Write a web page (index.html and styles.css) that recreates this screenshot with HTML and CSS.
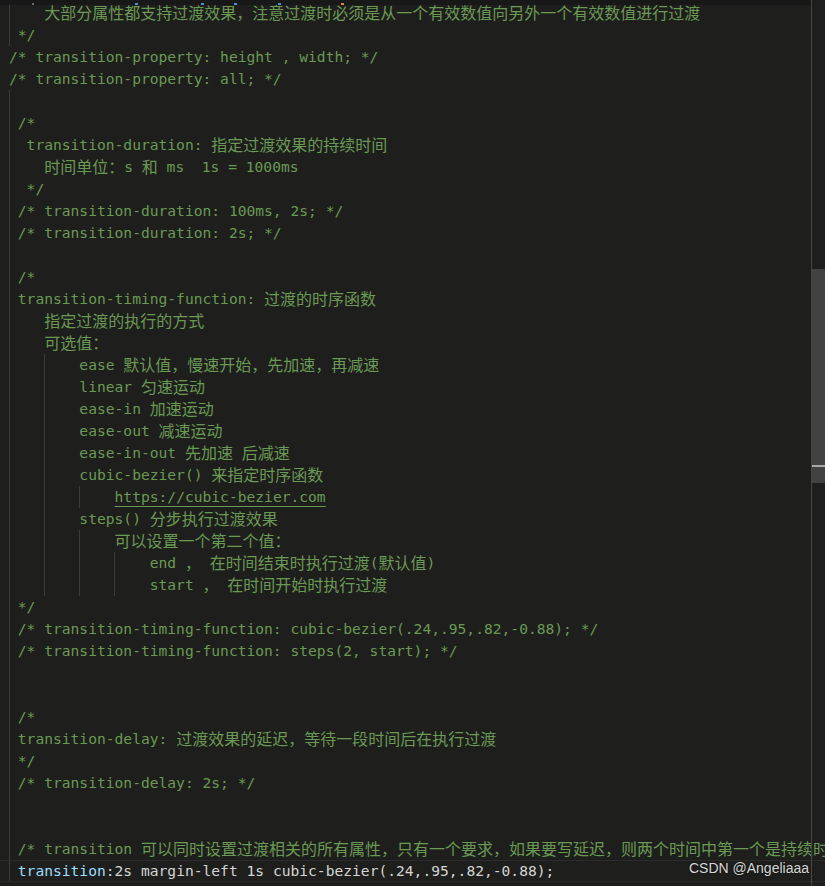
FILE: index.html
```html
<!DOCTYPE html>
<html lang="zh">
<head>
<meta charset="utf-8">
<title>transition</title>
<link rel="stylesheet" href="styles.css">
</head>
<body>
<div class="editor">
  <div class="code">
    <div class="line">    <span class="z">大部分属性都支持过渡效果，注意过渡时必须是从一个有效数值向另外一个有效数值进行过渡</span></div>
    <div class="line"> */</div>
    <div class="line c0">/* transition-property: height , width; */</div>
    <div class="line c0">/* transition-property: all; */</div>
    <div class="line"></div>
    <div class="line"> /*</div>
    <div class="line">  transition-duration: <span class="z">指定过渡效果的持续时间</span></div>
    <div class="line">    <span class="z">时间单位：</span>s <span class="z">和</span> ms  1s = 1000ms</div>
    <div class="line">  */</div>
    <div class="line"> /* transition-duration: 100ms, 2s; */</div>
    <div class="line"> /* transition-duration: 2s; */</div>
    <div class="line"></div>
    <div class="line"> /*</div>
    <div class="line"> transition-timing-function: <span class="z">过渡的时序函数</span></div>
    <div class="line">    <span class="z">指定过渡的执行的方式</span></div>
    <div class="line">    <span class="z">可选值：</span></div>
    <div class="line g4">        ease <span class="z">默认值，慢速开始，先加速，再减速</span></div>
    <div class="line g4">        linear <span class="z">匀速运动</span></div>
    <div class="line g4">        ease-in <span class="z">加速运动</span></div>
    <div class="line g4">        ease-out <span class="z">减速运动</span></div>
    <div class="line g4">        ease-in-out <span class="z">先加速</span> <span class="z">后减速</span></div>
    <div class="line g4">        cubic-bezier() <span class="z">来指定时序函数</span></div>
    <div class="line g8">            <span class="link">https://cubic-bezier.com</span></div>
    <div class="line g4">        steps() <span class="z">分步执行过渡效果</span></div>
    <div class="line g8">            <span class="z">可以设置一个第二个值：</span></div>
    <div class="line g12">                end <span class="z">，</span> <span class="z">在时间结束时执行过渡</span>(<span class="z">默认值</span>)</div>
    <div class="line g12">                start <span class="z">，</span> <span class="z">在时间开始时执行过渡</span></div>
    <div class="line"> */</div>
    <div class="line"> /* transition-timing-function: cubic-bezier(.24,.95,.82,-0.88); */</div>
    <div class="line"> /* transition-timing-function: steps(2, start); */</div>
    <div class="line"></div>
    <div class="line"></div>
    <div class="line"> /*</div>
    <div class="line"> transition-delay: <span class="z">过渡效果的延迟，等待一段时间后在执行过渡</span></div>
    <div class="line"> */</div>
    <div class="line"> /* transition-delay: 2s; */</div>
    <div class="line"></div>
    <div class="line"></div>
    <div class="line"> /* transition <span class="z">可以同时设置过渡相关的所有属性，只有一个要求，如果要写延迟，则两个时间中第一个是持续时</span></div>
    <div class="line cur"> <span class="prop">transition</span><span class="val">:2s margin-left 1s cubic-bezier(.24,.95,.82,-0.88);</span></div>
  </div>
  <div class="topshade">
    <span class="frag f1"></span><span class="frag f2"></span><span class="frag f3"></span><span class="frag f4"></span><span class="frag f5"></span><span class="frag f6"></span>
  </div>
  <div class="vscroll">
    <div class="thumb"><div class="mark"></div></div>
  </div>
  <div class="watermark">CSDN @Angeliaaa</div>
</div>
</body>
</html>
```
FILE: styles.css
```css
html, body {
  margin: 0;
  padding: 0;
  background: #1e1f1c;
  overflow: hidden;
}

.editor {
  position: relative;
  width: 825px;
  height: 886px;
  overflow: hidden;
  background: #1e1f1c;
}

.code {
  padding-top: 2px;
  font-family: "DejaVu Sans Mono", "Liberation Mono", monospace;
  font-size: 14.62px;
  color: #6a9955;
}

.line {
  --gc: #3c3d3a;
  height: 22px;
  line-height: 22px;
  white-space: pre;
  padding-left: 9px;
  box-sizing: border-box;
  background: linear-gradient(var(--gc), var(--gc)) 9px 0 / 1px 100% no-repeat;
}

.line.c0 {
  background: none;
}

.line.g4 {
  background:
    linear-gradient(var(--gc), var(--gc)) 9px 0 / 1px 100% no-repeat,
    linear-gradient(var(--gc), var(--gc)) 44px 0 / 1px 100% no-repeat;
}

.line.g8 {
  background:
    linear-gradient(var(--gc), var(--gc)) 9px 0 / 1px 100% no-repeat,
    linear-gradient(var(--gc), var(--gc)) 44px 0 / 1px 100% no-repeat,
    linear-gradient(var(--gc), var(--gc)) 79px 0 / 1px 100% no-repeat;
}

.line.g12 {
  background:
    linear-gradient(var(--gc), var(--gc)) 9px 0 / 1px 100% no-repeat,
    linear-gradient(var(--gc), var(--gc)) 44px 0 / 1px 100% no-repeat,
    linear-gradient(var(--gc), var(--gc)) 79px 0 / 1px 100% no-repeat,
    linear-gradient(var(--gc), var(--gc)) 114px 0 / 1px 100% no-repeat;
}

.z {
  font-family: "Noto Sans CJK SC", "Noto Sans CJK JP", sans-serif;
  font-size: 16px;
  line-height: 16px;
  position: relative;
  top: 1px;
}

.link {
  text-decoration: underline;
  text-underline-offset: 4px;
  text-decoration-thickness: 1px;
}

.line.cur {
  box-shadow: inset 0 1px 0 #2b2c2a, inset 0 -1px 0 #2b2c2a;
}

.prop {
  color: #9cdcfe;
}

.val {
  color: #d4d4d4;
}

.topshade {
  position: absolute;
  top: 0;
  left: 0;
  width: 811px;
  height: 5px;
  background: #171817;
  display: flex;
  align-items: flex-end;
}

.frag {
  display: block;
  height: 2px;
  width: 3px;
  background: #4f8fd0;
}

.f1 { margin-left: 32px; background: #6b6b6b; width: 2px; }
.f2 { margin-left: 101px; }
.f3 { margin-left: 63px; }
.f4 { margin-left: 30px; }
.f5 { margin-left: 41px; }
.f6 { margin-left: 60px; background: #d18a4a; }

.vscroll {
  position: absolute;
  top: 0;
  right: 0;
  width: 13px;
  height: 886px;
  border-left: 1px solid #454545;
}

.thumb {
  margin-top: 269px;
  height: 214px;
  background: #424242;
  padding-top: 196px;
  box-sizing: border-box;
}

.mark {
  height: 2px;
  background: #a8a8a8;
}

.watermark {
  position: absolute;
  right: 16px;
  top: 859px;
  font-family: "Liberation Sans", Arial, sans-serif;
  font-size: 14px;
  line-height: 18px;
  color: #d6d6d6;
  text-shadow: 0 0 2px rgba(0, 0, 0, 0.6);
}
```
